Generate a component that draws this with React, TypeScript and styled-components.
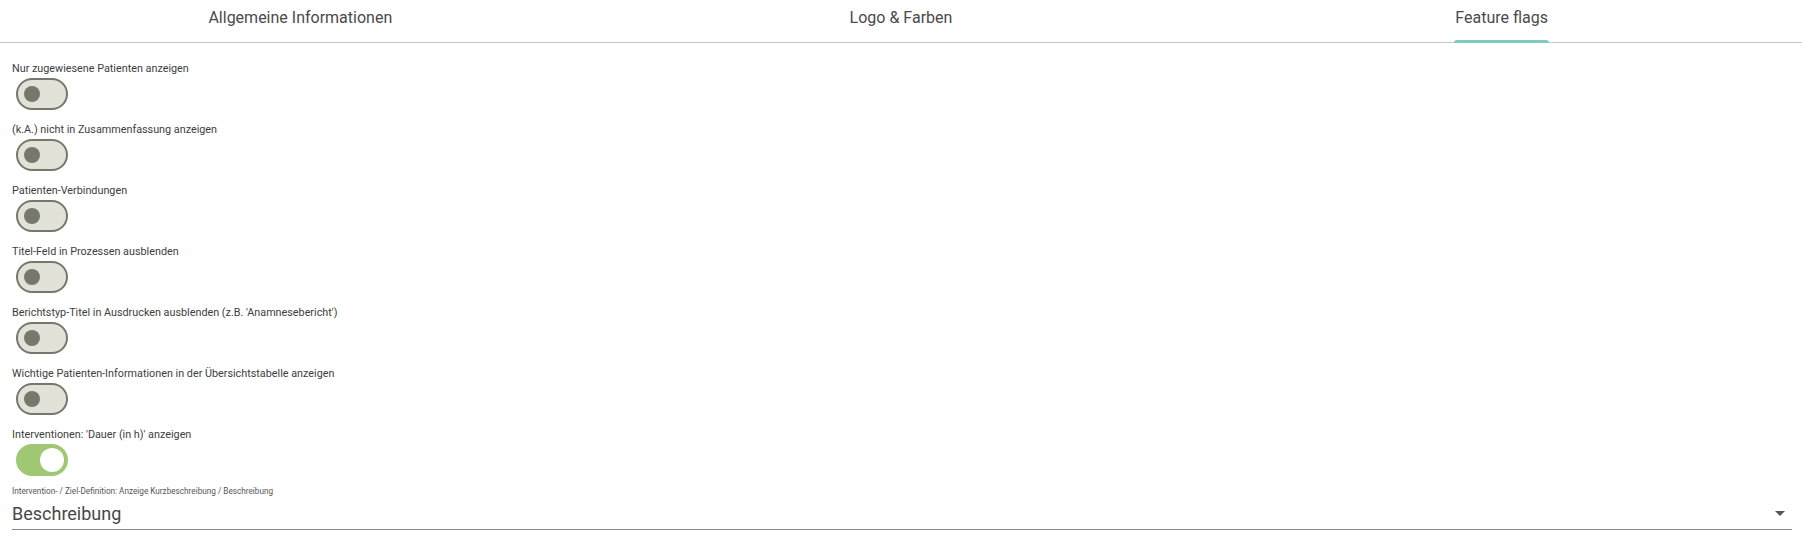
import React, { useState } from 'react';
import styled, { createGlobalStyle } from 'styled-components';

const GlobalStyle = createGlobalStyle`
  body {
    margin: 0;
    background: #ffffff;
    font-family: Roboto, "Liberation Sans", sans-serif;
  }
`;

const TABS = ['Allgemeine Informationen', 'Logo & Farben', 'Feature flags'];

const FLAGS = [
  { label: 'Nur zugewiesene Patienten anzeigen', on: false },
  { label: '(k.A.) nicht in Zusammenfassung anzeigen', on: false },
  { label: 'Patienten-Verbindungen', on: false },
  { label: 'Titel-Feld in Prozessen ausblenden', on: false },
  { label: "Berichtstyp-Titel in Ausdrucken ausblenden (z.B. 'Anamnesebericht')", on: false },
  { label: 'Wichtige Patienten-Informationen in der Übersichtstabelle anzeigen', on: false },
  { label: "Interventionen: 'Dauer (in h)' anzeigen", on: true },
];

const App = () => {
  const [active, setActive] = useState(2);
  const [flags, setFlags] = useState(FLAGS.map((f) => f.on));

  const toggle = (i: number) =>
    setFlags((prev) => prev.map((v, j) => (j === i ? !v : v)));

  return (
    <>
      <GlobalStyle />
      <TabBar>
        {TABS.map((t, i) => (
          <Tab key={t} onClick={() => setActive(i)}>
            <TabInner>
              <TabText>{t}</TabText>
              <Indicator active={i === active} />
            </TabInner>
          </Tab>
        ))}
      </TabBar>
      <Content>
        {FLAGS.map((f, i) => (
          <FlagRow key={f.label} last={i === FLAGS.length - 1}>
            <FlagLabel>{f.label}</FlagLabel>
            <Switch on={flags[i]} onClick={() => toggle(i)}>
              <Thumb on={flags[i]} />
            </Switch>
          </FlagRow>
        ))}
        <Field>
          <FieldLabel>Intervention- / Ziel-Definition: Anzeige Kurzbeschreibung / Beschreibung</FieldLabel>
          <SelectBox>
            <SelectValue>Beschreibung</SelectValue>
            <Arrow />
          </SelectBox>
        </Field>
      </Content>
    </>
  );
};

export default App;

const TabBar = styled.div`
  display: grid;
  grid-template-columns: repeat(3, 1fr);
  height: 42px;
  border-bottom: 1px solid #c9c9c9;
`;

const Tab = styled.button`
  display: flex;
  justify-content: center;
  height: 43px;
  margin-bottom: -1px;
  padding: 0;
  border: none;
  background: transparent;
  cursor: pointer;
`;

const TabInner = styled.div`
  display: flex;
  flex-direction: column;
  align-items: stretch;
`;

const TabText = styled.span`
  flex: 1;
  display: flex;
  align-items: center;
  padding: 0 1px 5px;
  font-family: Roboto, "Liberation Sans", sans-serif;
  font-size: 16px;
  color: #4a4a4a;
  white-space: nowrap;
`;

const Indicator = styled.div<{ active: boolean }>`
  height: 3px;
  border-radius: 3px 3px 0 0;
  background: ${({ active }) => (active ? '#80cbc0' : 'transparent')};
`;

const Content = styled.div`
  padding: 19px 10px 0 12px;
`;

const FlagRow = styled.div<{ last: boolean }>`
  display: flex;
  flex-direction: column;
  align-items: flex-start;
  margin-bottom: ${({ last }) => (last ? '10px' : '13px')};
`;

const FlagLabel = styled.div`
  font-size: 10.8px;
  line-height: 13px;
  color: #3d3d3d;
  margin-bottom: 3px;
`;

const Switch = styled.button<{ on: boolean }>`
  display: flex;
  align-items: center;
  box-sizing: border-box;
  width: 52px;
  height: 32px;
  margin-left: 4px;
  padding: 0;
  border-radius: 16px;
  border: 2px solid ${({ on }) => (on ? '#a0c874' : '#76786b')};
  background: ${({ on }) => (on ? '#a0c874' : '#e2e2d9')};
  cursor: pointer;
`;

const Thumb = styled.span<{ on: boolean }>`
  display: block;
  width: ${({ on }) => (on ? '24px' : '16px')};
  height: ${({ on }) => (on ? '24px' : '16px')};
  border-radius: 50%;
  margin-left: ${({ on }) => (on ? '22px' : '6px')};
  background: ${({ on }) => (on ? '#ffffff' : '#76786b')};
`;

const Field = styled.div`
  display: flex;
  flex-direction: column;
`;

const FieldLabel = styled.div`
  font-size: 8.2px;
  line-height: 10px;
  color: #555555;
  margin-bottom: 7px;
`;

const SelectBox = styled.div`
  display: flex;
  align-items: center;
  justify-content: space-between;
  padding-bottom: 5px;
  border-bottom: 1px solid #8a8a8a;
  cursor: pointer;
`;

const SelectValue = styled.span`
  font-size: 18px;
  line-height: 21px;
  color: #474747;
`;

const Arrow = styled.span`
  width: 0;
  height: 0;
  margin-right: 7px;
  border-left: 5px solid transparent;
  border-right: 5px solid transparent;
  border-top: 5px solid #555555;
`;
